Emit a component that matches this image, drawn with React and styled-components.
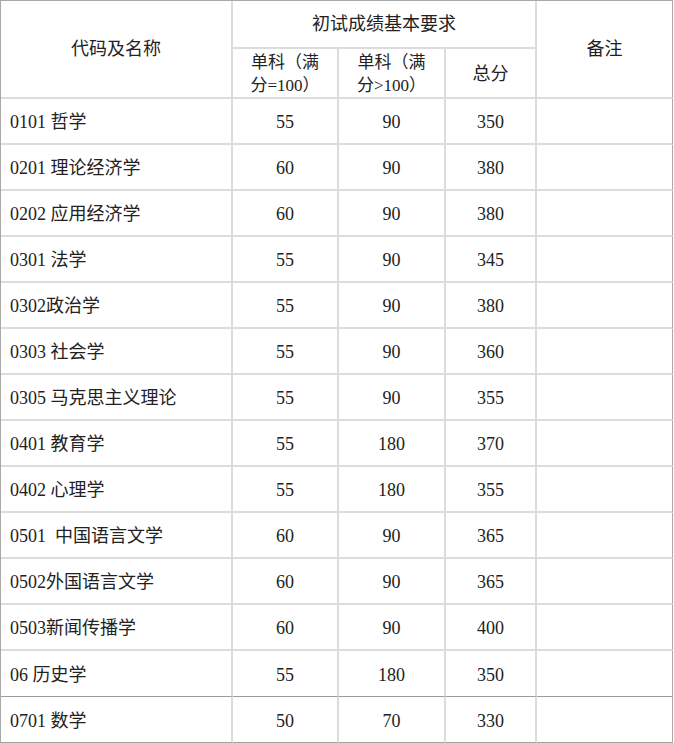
import React from 'react';
import styled, { createGlobalStyle } from 'styled-components';

const rows = [
  { name: '0101 哲学', single: '55', over: '90', total: '350' },
  { name: '0201 理论经济学', single: '60', over: '90', total: '380' },
  { name: '0202 应用经济学', single: '60', over: '90', total: '380' },
  { name: '0301 法学', single: '55', over: '90', total: '345' },
  { name: '0302政治学', single: '55', over: '90', total: '380' },
  { name: '0303 社会学', single: '55', over: '90', total: '360' },
  { name: '0305 马克思主义理论', single: '55', over: '90', total: '355' },
  { name: '0401 教育学', single: '55', over: '180', total: '370' },
  { name: '0402 心理学', single: '55', over: '180', total: '355' },
  { name: '0501  中国语言文学', single: '60', over: '90', total: '365' },
  { name: '0502外国语言文学', single: '60', over: '90', total: '365' },
  { name: '0503新闻传播学', single: '60', over: '90', total: '400' },
  { name: '06 历史学', single: '55', over: '180', total: '350', dark: true },
  { name: '0701 数学', single: '50', over: '70', total: '330', last: true },
];

const GlobalStyle = createGlobalStyle`
  html, body {
    margin: 0;
    padding: 0;
    background: #ffffff;
  }
  body {
    font-family: "Liberation Serif", "Noto Sans CJK SC", serif;
    color: #222222;
  }
`;

const Table = styled.table`
  width: 673px;
  table-layout: fixed;
  border-collapse: separate;
  border-spacing: 0;
  border-top: 1px solid #a8a8a8;
  border-left: 1px solid #a8a8a8;
  font-size: 18px;
`;

const Cell = styled.td`
  box-sizing: border-box;
  padding: ${(p) => p.$pt ?? 3}px 0 0;
  height: ${(p) => p.$h || 46}px;
  border-right: ${(p) => (p.$edge ? '1px solid #a8a8a8' : '2px solid #dcdcdc')};
  border-bottom: ${(p) =>
    p.$last ? '1px solid #a0a0a0' : p.$dark ? '1px solid #9c9c9c' : '2px solid #dcdcdc'};
  text-align: center;
  vertical-align: middle;
  white-space: pre;
  line-height: 23px;
`;

const NameCell = styled(Cell)`
  padding-left: 9px;
  text-align: left;
`;

const HeadCell = styled(Cell)`
  font-size: 18px;
`;

const SubHead = styled(HeadCell)`
  font-size: 17px;
`;

const Col = styled.col`
  width: ${(p) => p.$w}px;
`;

export default function App() {
  return (
    <>
      <GlobalStyle />
      <Table>
        <colgroup>
          <Col $w={232} />
          <Col $w={106} />
          <Col $w={107} />
          <Col $w={91} />
          <Col $w={136} />
        </colgroup>
        <thead>
          <tr>
            <HeadCell rowSpan={2} $h={98} $pt={0}>
              代码及名称
            </HeadCell>
            <HeadCell colSpan={3} $h={48} $pt={0}>
              初试成绩基本要求
            </HeadCell>
            <HeadCell rowSpan={2} $h={98} $pt={0} $edge>
              备注
            </HeadCell>
          </tr>
          <tr>
            <SubHead $h={50} $pt={1}>
              单科（满
              <br />
              分=100）
            </SubHead>
            <SubHead $h={50} $pt={1}>
              单科（满
              <br />
              分&gt;100）
            </SubHead>
            <HeadCell $h={50} $pt={3}>
              总分
            </HeadCell>
          </tr>
        </thead>
        <tbody>
          {rows.map((row, i) => (
            <tr key={i}>
              <NameCell $dark={row.dark} $last={row.last}>
                {row.name}
              </NameCell>
              <Cell $dark={row.dark} $last={row.last}>
                {row.single}
              </Cell>
              <Cell $dark={row.dark} $last={row.last}>
                {row.over}
              </Cell>
              <Cell $dark={row.dark} $last={row.last}>
                {row.total}
              </Cell>
              <Cell $dark={row.dark} $last={row.last} $edge />
            </tr>
          ))}
        </tbody>
      </Table>
    </>
  );
}
